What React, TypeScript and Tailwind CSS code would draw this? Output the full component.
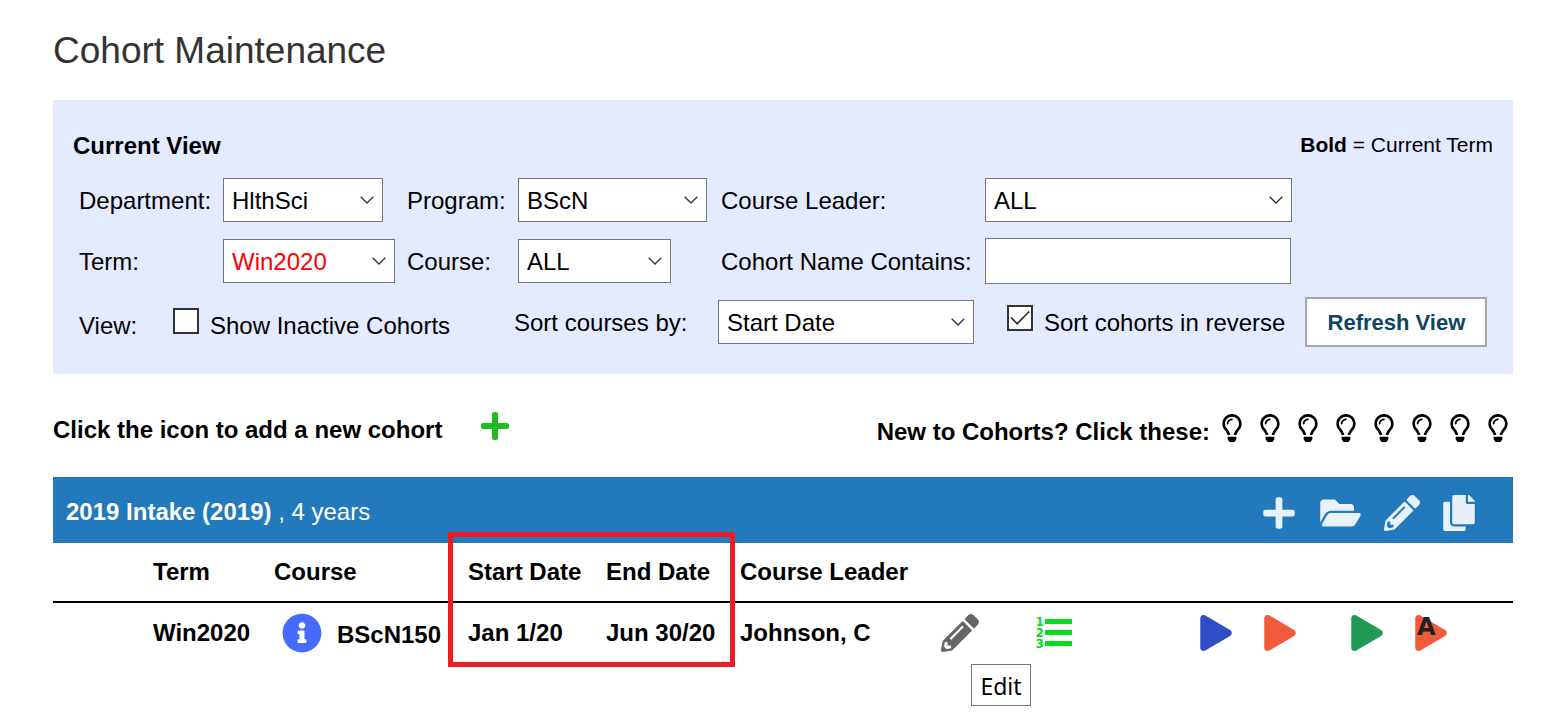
import React, { useId } from "react";
import {
  FaCopy,
  FaFolderOpen,
  FaInfoCircle,
  FaPencilAlt,
  FaPlay,
  FaPlus,
  FaRegLightbulb,
} from "react-icons/fa";

type DropdownProps = {
  label: string;
  options: string[];
  labelClass?: string;
  widthClass: string;
  textClass?: string;
};

function Dropdown({ label, options, labelClass = "", widthClass, textClass = "text-black" }: DropdownProps) {
  const id = useId();
  return (
    <>
      <label htmlFor={id} className={`pt-0.5 whitespace-nowrap ${labelClass}`}>
        {label}
      </label>
      <div className={`relative shrink-0 ${widthClass}`}>
        <select
          id={id}
          className={`block h-11 w-full appearance-none border border-[#767676] bg-white pt-0.5 pr-8 pl-2 ${textClass}`}
        >
          {options.map((option) => (
            <option key={option}>{option}</option>
          ))}
        </select>
        <svg
          viewBox="0 0 14 8"
          className="pointer-events-none absolute top-[18px] right-[9px] h-2 w-3.5"
          fill="none"
          stroke="#333"
          strokeWidth="1.3"
        >
          <path d="M0.7 0.8 L7 7 L13.3 0.8" />
        </svg>
      </div>
    </>
  );
}

function Checkbox({ label, defaultChecked = false }: { label: string; defaultChecked?: boolean }) {
  return (
    <label className="flex items-start gap-[11px] whitespace-nowrap">
      <span className="relative block size-[26px]">
        <input
          type="checkbox"
          defaultChecked={defaultChecked}
          className="peer block size-[26px] appearance-none border-2 border-[#333] bg-white"
        />
        <svg
          viewBox="0 0 26 26"
          className="pointer-events-none absolute inset-0 hidden size-[26px] peer-checked:block"
          fill="none"
          stroke="#333"
          strokeWidth="1.7"
        >
          <path d="M4 12.5 L10.2 18.7 L22.2 6.5" />
        </svg>
      </span>
      <span className="leading-9">{label}</span>
    </label>
  );
}

function IconButton({ label, children }: { label: string; children: React.ReactNode }) {
  return (
    <button type="button" aria-label={label} className="block shrink-0 cursor-pointer">
      {children}
    </button>
  );
}

function NumberedListIcon() {
  return (
    <svg
      viewBox="0 0 36 36"
      className="size-9 font-['DejaVu_Sans',sans-serif] text-[12px] font-bold text-[#07dc20]"
      fill="currentColor"
    >
      <text x="-0.5" y="11">1</text>
      <text x="-0.5" y="22">2</text>
      <text x="-0.5" y="33">3</text>
      <rect x="9" y="4" width="27" height="5" rx="0.5" />
      <rect x="9" y="15" width="27" height="5" rx="0.5" />
      <rect x="9" y="26" width="27" height="5" rx="0.5" />
    </svg>
  );
}

const tips = [1, 2, 3, 4, 5, 6, 7, 8];

export default function App() {
  return (
    <main className="bg-white pr-[52px] pb-12 pl-[53px] font-['Liberation_Sans',Arial,sans-serif] text-2xl text-black">
      <h1 className="pt-[25px] pb-[23px] text-[37px] leading-[52px] text-[#333]">Cohort Maintenance</h1>

      <form className="bg-[#e4eaff] px-5 pt-[27px] pb-[27px]" onSubmit={(e) => e.preventDefault()}>
        <div className="flex items-center justify-between leading-9">
          <h2 className="font-bold">Current View</h2>
          <p className="pb-0.5 text-[21px]">
            <b>Bold</b> = Current Term
          </p>
        </div>

        <div className="mt-[13px] grid grid-cols-[144px_184px_111px_203px_264px_1fr] items-center gap-y-4 pl-1.5">
          <Dropdown label="Department:" options={["HlthSci"]} widthClass="w-40" />
          <Dropdown label="Program:" options={["BScN"]} widthClass="w-[189px]" />
          <Dropdown label="Course Leader:" options={["ALL"]} widthClass="w-[307px]" />
          <Dropdown label="Term:" options={["Win2020"]} widthClass="w-[172px]" textClass="text-[#f00]" />
          <Dropdown label="Course:" options={["ALL"]} widthClass="w-[153px]" />
          <label htmlFor="cohort-name" className="pt-0.5 whitespace-nowrap">
            Cohort Name Contains:
          </label>
          <input
            id="cohort-name"
            type="text"
            className="block h-[46px] w-[306px] border border-[#767676] bg-white px-2"
          />
        </div>

        <div className="mt-[13px] flex items-center pl-1.5">
          <div className="flex w-[435px] shrink-0 pt-2">
            <span className="w-[94px] leading-9">View:</span>
            <Checkbox label="Show Inactive Cohorts" />
          </div>
          <Dropdown
            label="Sort courses by:"
            options={["Start Date"]}
            labelClass="w-[204px] shrink-0"
            widthClass="w-64"
          />
          <div className="ml-[33px] pt-0.5">
            <Checkbox label="Sort cohorts in reverse" defaultChecked />
          </div>
          <button
            type="submit"
            className="ml-5 h-[50px] w-[182px] shrink-0 border-2 border-[#a6a6a6] bg-white pt-0.5 text-[22px] font-bold whitespace-nowrap text-[#0e4560]"
          >
            Refresh View
          </button>
        </div>
      </form>

      <div className="flex items-start justify-between pt-9 pb-[27px] leading-9 font-bold">
        <div className="flex items-start gap-[39px]">
          <p className="pt-0.5">Click the icon to add a new cohort</p>
          <IconButton label="Add a new cohort">
            <FaPlus className="h-8 w-7 text-[#1fbb1f]" />
          </IconButton>
        </div>
        <div className="flex items-start gap-3 pt-1 pr-[5px]">
          <p>New to Cohorts? Click these:</p>
          <div className="flex gap-[18px]">
            {tips.map((n) => (
              <IconButton key={n} label={`Tip ${n}`}>
                <FaRegLightbulb className="h-7 w-5" />
              </IconButton>
            ))}
          </div>
        </div>
      </div>

      <section>
        <div className="flex h-[66px] items-center justify-between bg-[#2279bc] pr-[38px] pl-[13px] text-white">
          <p className="pt-1">
            <b>2019 Intake (2019)</b> , 4 years
          </p>
          <div className="flex items-center gap-[23px] pt-1.5 text-[#e8f1f9]">
            <IconButton label="Add course">
              <FaPlus className="h-9 w-8" />
            </IconButton>
            <IconButton label="Open intake">
              <FaFolderOpen className="ml-0.5 h-9 w-[41px]" />
            </IconButton>
            <IconButton label="Edit intake">
              <FaPencilAlt className="size-9" />
            </IconButton>
            <IconButton label="Copy intake">
              <FaCopy className="h-9 w-8" />
            </IconButton>
          </div>
        </div>

        <div className="relative">
          <table className="w-full table-fixed border-collapse text-left font-bold whitespace-nowrap">
            <colgroup>
              <col className="w-[100px]" />
              <col className="w-[121px]" />
              <col className="w-[194px]" />
              <col className="w-[138px]" />
              <col className="w-[134px]" />
              <col className="w-[201px]" />
              <col className="w-[95px]" />
              <col className="w-[164px]" />
              <col />
            </colgroup>
            <thead>
              <tr className="h-[59px] border-b-2 border-black">
                <td />
                <th scope="col">Term</th>
                <th scope="col">Course</th>
                <th scope="col">Start Date</th>
                <th scope="col">End Date</th>
                <th scope="col">Course Leader</th>
                <td colSpan={3} />
              </tr>
            </thead>
            <tbody>
              <tr className="h-[60px]">
                <td />
                <td>Win2020</td>
                <td>
                  <div className="flex items-center gap-[15px] pl-2">
                    <IconButton label="Course information">
                      <FaInfoCircle className="size-10 text-[#486bff]" />
                    </IconButton>
                    <span className="pt-1">BScN150</span>
                  </div>
                </td>
                <td>Jan 1/20</td>
                <td>Jun 30/20</td>
                <td>Johnson, C</td>
                <td>
                  <div className="relative">
                    <IconButton label="Edit">
                      <FaPencilAlt className="size-[38px] text-[#666]" />
                    </IconButton>
                    <span
                      role="tooltip"
                      className="absolute top-[50px] left-[30px] flex h-[42px] w-[60px] items-center justify-center border border-[#767676] bg-white pt-1 font-['Noto_Sans',sans-serif] text-[23px] font-normal"
                    >
                      Edit
                    </span>
                  </div>
                </td>
                <td>
                  <IconButton label="Numbered list">
                    <NumberedListIcon />
                  </IconButton>
                </td>
                <td>
                  <div className="flex gap-[55px]">
                    <div className="flex gap-8">
                      <IconButton label="Run blue">
                        <FaPlay className="h-9 w-8 text-[#304dc8]" />
                      </IconButton>
                      <IconButton label="Run orange">
                        <FaPlay className="h-9 w-8 text-[#f15b3a]" />
                      </IconButton>
                    </div>
                    <div className="flex gap-8">
                      <IconButton label="Run green">
                        <FaPlay className="h-9 w-8 text-[#229a56]" />
                      </IconButton>
                      <button type="button" className="relative block shrink-0 cursor-pointer">
                        <FaPlay className="h-9 w-8 text-[#f15b3a]" />
                        <span className="absolute top-0 left-0.5 font-['DejaVu_Sans',sans-serif] text-2xl leading-6 text-[#222]">
                          A
                        </span>
                      </button>
                    </div>
                  </div>
                </td>
              </tr>
            </tbody>
          </table>
          <div className="pointer-events-none absolute -top-[11px] left-[395px] h-[135px] w-[287px] border-5 border-[#ed1c24]" />
        </div>
      </section>
    </main>
  );
}
